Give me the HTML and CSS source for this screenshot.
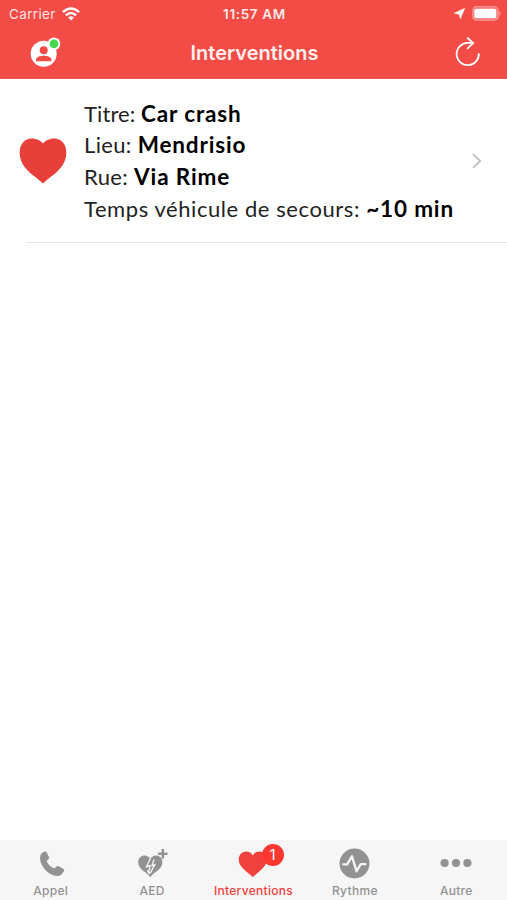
FILE: index.html
```html
<!DOCTYPE html>
<html lang="fr">
<head>
<meta charset="utf-8">
<title>Interventions</title>
<link rel="stylesheet" href="styles.css">
</head>
<body>
<div class="app">
  <header class="header">
    <div class="status">
      <div class="status-left"><span class="carrier">Carrier</span>
        <svg class="wifi" width="18" height="14" viewBox="0 0 18 14" fill="none" stroke="#fff" stroke-width="2.4"><path d="M.9 5.2Q9-2.2 17.1 5.2M3.9 8.3Q9 3.7 14.1 8.3"/><path d="M6.1 10.4Q9 8 11.9 10.4L9 13.5Z" fill="#fff" stroke="none"/></svg>
      </div>
      <span class="time">11:57 AM</span>
      <div class="status-right">
        <svg width="11" height="11" viewBox="0 0 11 11"><path d="M10.8.2 6.4 10.8 5.1 6.3.2 5.2Z" fill="#fff" stroke="#fff" stroke-width=".5"/></svg>
        <svg width="30" height="15" viewBox="0 0 30 15"><rect x=".7" y=".7" width="25.6" height="13.6" rx="4" fill="#fff" fill-opacity=".22" stroke="#fff" stroke-opacity=".35" stroke-width="1.2"/><rect x="2.3" y="2.8" width="22" height="9.4" rx="2" fill="#fff"/><path d="M27.4 5.2Q29.8 7.5 27.4 9.8Z" fill="#fff" fill-opacity=".5"/></svg>
      </div>
    </div>
    <div class="nav">
      <svg class="profile" width="32" height="32" viewBox="0 0 32 32"><circle cx="13.7" cy="16.8" r="13" fill="#fff"/><circle cx="13.7" cy="13.2" r="4" fill="#f34b46"/><path d="M6 24.2V22.9C6 17.5 21.4 17.5 21.4 22.9V24.2Z" fill="#f34b46"/><circle cx="24" cy="6.8" r="6.3" fill="#fff"/><circle cx="24" cy="6.8" r="4.4" fill="#45d94b"/></svg>
      <h1>Interventions</h1>
      <svg class="refresh" width="26" height="32" viewBox="0 0 26 32" fill="none" stroke="#fff" stroke-width="1.8"><path d="M23.8 16.2A11.1 11.1 0 1 1 13 5.9H17.9"/><path d="M12.1.5 18.2 6.1 12.1 11.9"/></svg>
    </div>
  </header>
  <main class="content">
    <article class="item">
      <svg class="heart" width="48" height="46" viewBox="0 0 48 46"><path d="M24 45.5C17.5 38.5 .7 31 .7 14.7.7 5.5 6.2.5 12.6.5 18 .5 22 3 24 5.5 26 3 30 .5 35.4.5 41.8.5 47.3 5.5 47.3 14.7 47.3 31 30.5 38.5 24 45.5Z" fill="#e93f3b"/></svg>
      <div class="details">
        <p><span class="label">Titre: </span><b>Car crash</b></p>
        <p><span class="label mid">Lieu: </span><b>Mendrisio</b></p>
        <p><span class="label mid">Rue: </span><b>Via Rime</b></p>
        <p><span class="label long">Temps véhicule de secours: </span><b>~10 min</b></p>
      </div>
      <svg class="chevron" width="10" height="16" viewBox="0 0 10 16" fill="none" stroke="#c5c5c8" stroke-width="2"><path d="M1 1.3 8.2 8 1 14.7"/></svg>
    </article>
  </main>
  <nav class="tabs">
    <div class="tab"><svg width="48" height="36" viewBox="0 0 48 36"><path transform="translate(.8 .8)" d="M13 9.2 16.5 6.8Q18 6.2 18.9 7.8L21.2 12.1Q21.8 13.5 20.5 14.5L18.9 16.1C20 19.5 23.1 22.3 26.5 23.7L28.4 22Q29.8 20.8 31.4 21.7L35.6 24.2Q37 25.3 36 26.8L33.6 29.7C25.6 36 8.6 21.2 13 9.2Z" fill="#929292"/></svg><span>Appel</span></div>
    <div class="tab"><svg width="48" height="36" viewBox="0 0 48 36"><path d="M22.3 33.2C19.3 28.4 10.2 25.6 10.2 18.3 10.2 10.8 19.6 9.4 22.3 15.2 25 9.4 34.4 10.8 34.4 18.3 34.4 25.6 25.3 28.4 22.3 33.2Z" fill="#929292"/><path d="M22.4 14.5 18.5 22.8 22 21.5 20.7 28.8M26 15.5 24 21.6 26.8 20.6 22.2 29.2M19.4 26.4 20.9 29.4 23.7 27.4" fill="none" stroke="#f6f6f6" stroke-width="1.3"/><path d="M34.8 5V14.4M30.1 9.7H39.5" stroke="#929292" stroke-width="2.5"/></svg><span>AED</span></div>
    <div class="tab active"><svg width="48" height="36" viewBox="0 0 48 36"><path d="M23.8 33.2C20.5 29 9.7 23.8 9.7 15.7 9.7 6.1 20.8 5 23.8 11.4 26.8 5 37.9 6.1 37.9 15.7 37.9 23.8 27.1 29 23.8 33.2Z" fill="#f1413e"/></svg><b class="badge">1</b><span>Interventions</span></div>
    <div class="tab"><svg width="48" height="36" viewBox="0 0 48 36"><circle cx="23.5" cy="19.5" r="15" fill="#929292"/><path d="M11.5 20.4H16.1L21 12.3 25.6 27.3 29.7 20.1H35.4" fill="none" stroke="#f6f6f6" stroke-width="2.3" stroke-linejoin="round"/></svg><span>Rythme</span></div>
    <div class="tab"><svg width="48" height="36" viewBox="0 0 48 36" fill="#929292"><circle cx="12.6" cy="19" r="4.1"/><circle cx="24" cy="19" r="4.1"/><circle cx="35.4" cy="19" r="4.1"/></svg><span>Autre</span></div>
  </nav>
</div>
</body>
</html>
```
FILE: styles.css
```css
* { box-sizing: border-box; }
body { margin: 0; background: #fff; font-family: Inter, sans-serif; }
svg { display: block; flex: none; }
.app { height: 900px; display: flex; flex-direction: column; }
.header { height: 79px; flex: none; background: #f34b46; color: #fff; border-bottom: 1px solid #e85753; }
.status { height: 27px; display: grid; grid-template-columns: 1fr auto 1fr; align-items: center; padding: 0 7px 0 9px; font-size: 13px; }
.status-left, .status-right { display: flex; align-items: center; }
.status-left { gap: 6px; }
.status-right { justify-content: flex-end; gap: 7px; margin-right: -2px; }
.carrier { font-size: 13.5px; letter-spacing: .35px; color: #ffe4e1; }
.time { font-size: 13.5px; font-weight: 600; letter-spacing: .65px; color: #ffebe9; }
.nav { height: 51px; display: grid; grid-template-columns: 1fr auto 1fr; align-items: center; padding: 0 28px 0 30px; }
.nav h1 { margin: 0; font-size: 20px; font-weight: 600; letter-spacing: 0; color: #fff0ee; }
.refresh { justify-self: end; margin-right: -2px; }
.content { flex: 1; }
.item { height: 164px; margin-left: 26px; border-bottom: 1px solid #e4e4e5; display: flex; align-items: center; }
.heart { margin-left: -7.5px; }
.details { flex: 1; margin: 1px 0 0 17.5px; font: 22px/31.6px Lato, sans-serif; color: #000; }
.details p { margin: 0; white-space: pre; }
.label { color: #222; letter-spacing: .1px; }
.label.mid { letter-spacing: .35px; }
.label.long { letter-spacing: .57px; }
.details b { font-size: 22.5px; font-weight: 700; line-height: 1; letter-spacing: .85px; }
.chevron { margin-right: 25px; }
.tabs { height: 60px; flex: none; display: grid; grid-template-columns: repeat(5, 1fr); background: #f6f6f6; }
.tab { position: relative; display: flex; flex-direction: column; align-items: center; padding-top: 4px; color: #929292; font-size: 12px; font-weight: 500; line-height: 16px; letter-spacing: .3px; }
.tab span { margin-top: 3px; }
.tab.active { color: #f1413e; }
.badge { position: absolute; top: 4px; left: 59px; width: 22px; height: 22px; border-radius: 50%; background: #fb3730; color: #fff; font-size: 15px; font-weight: 400; line-height: 22px; text-align: center; }
```
